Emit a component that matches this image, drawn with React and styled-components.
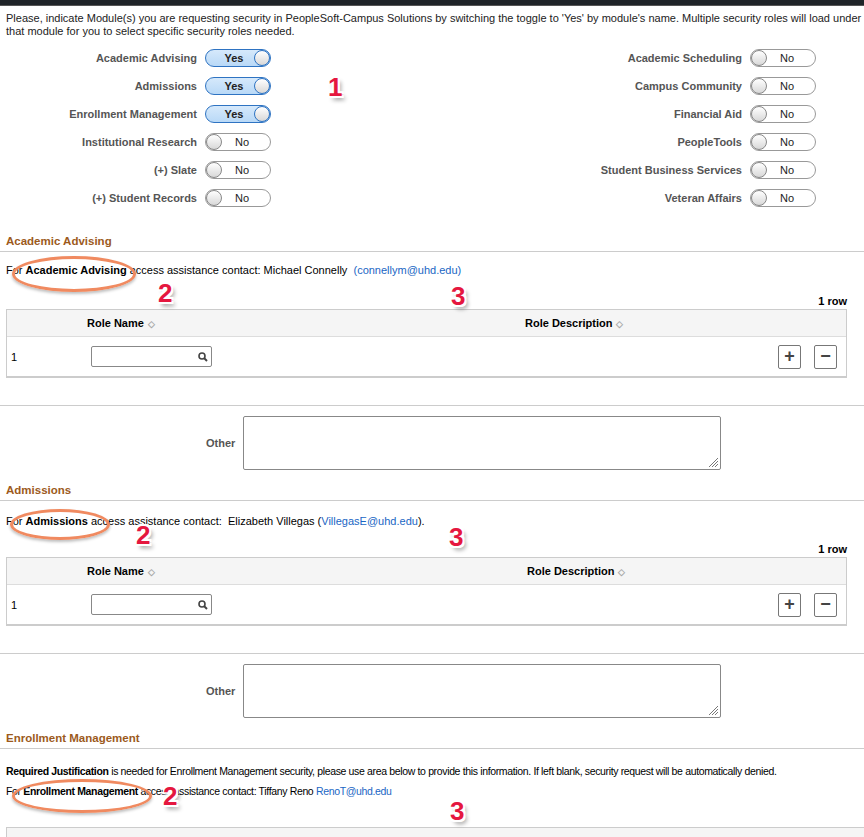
import React from "react";
import styled, { createGlobalStyle } from "styled-components";

const Global = createGlobalStyle`
  body { margin: 0; background: #fff; font-family: "Liberation Sans", Arial, sans-serif; font-size: 11px; color: #000; }
`;
const Page = styled.div` position: relative; width: 864px; height: 837px; overflow: hidden; `;
const TopBar = styled.div` height: 5px; background: #1f2428; border-bottom: 1px solid #555; `;
const Intro = styled.p` margin: 6px 0 0 6px; line-height: 13px; color: #222; `;
const Toggles = styled.div` display: grid; grid-template-columns: 1fr 1fr; margin-top: 11px; `;
const Col = styled.div` display: flex; flex-direction: column; gap: 10px; `;
const TRow = styled.div` display: flex; align-items: center; gap: 8px; height: 18px; `;
const TLabel = styled.span` width: ${p => p.$w}px; text-align: right; font-weight: bold; color: #555; `;
const Toggle = styled.span`
  position: relative; width: 64px; height: 16px; border-radius: 9px; border: 1px solid ${p => p.$on ? "#2e73c2" : "#999"};
  background: ${p => p.$on ? "linear-gradient(#d6e9fb,#b9d9f7)" : "#fff"};
  display: flex; align-items: center; justify-content: center; font-weight: ${p => p.$on ? "bold" : "normal"}; color: #222;
  & > i { position: absolute; top: 0; ${p => p.$on ? "right: 0;" : "left: 0;"} width: 16px; height: 16px; border-radius: 50%;
    border: 1px solid ${p => p.$on ? "#2e73c2" : "#888"}; box-sizing: border-box; background: linear-gradient(#fff,#d8d8d8); }
  & > b { font-weight: inherit; ${p => p.$on ? "margin-right: 8px;" : "margin-left: 8px;"} }
`;
const Header = styled.div` margin-top: ${p => p.$mt}px; padding: 0 6px 4px; border-bottom: 1px solid #ccc; color: #9c5a1c; font-weight: bold; font-size: 11.5px; `;
const Line = styled.p` margin: ${p => p.$mt}px 0 0 6px; white-space: nowrap; ${p => p.$narrow && "font-size: 10.5px; letter-spacing: -0.35px;"} `;
const Link = styled.span` color: #1a66c4; `;
const RowCount = styled.div` text-align: right; font-weight: bold; margin: ${p => p.$mt}px 17px 0 0; line-height: 13px; `;
const Grid = styled.div` margin: 1px 17px 0 6px; border: 1px solid #ccc; border-bottom: 2px solid #ccc; `;
const GHead = styled.div` height: 26px; background: #f5f5f5; border-bottom: 1px solid #ddd; display: grid; grid-template-columns: 80px ${p => p.$c}px 1fr; align-items: center; font-weight: bold; `;
const Sort = styled.span` color: #aaa; font-size: 9px; margin-left: 4px; `;
const GRow = styled.div` height: 39px; display: grid; grid-template-columns: 80px 1fr auto; align-items: center; padding-left: 4px; color: #000; `;
const Input = styled.div` width: 121px; height: 21px; border: 1px solid #888; border-radius: 2px; box-sizing: border-box; display: flex; justify-content: flex-end; align-items: center; padding-right: 3px; `;
const Btns = styled.div` display: flex; gap: 13px; padding-right: 9px; `;
const Btn = styled.span` width: 21px; height: 22px; border: 1px solid #777; border-radius: 2px; display: flex; align-items: center; justify-content: center; font-weight: bold; font-size: 18px; color: #444; `;
const Sep = styled.div` border-top: 1px solid #ccc; margin-top: ${p => p.$mt}px; `;
const OtherRow = styled.div` display: flex; gap: 8px; margin: 10px 0 0 206px; align-items: center; `;
const Area = styled.div` width: 476px; height: ${p => p.$h}px; border: 1px solid #888; border-radius: 2px; position: relative; `;
const Grip = styled.svg` position: absolute; right: 1px; bottom: 1px; `;
const GridTop = styled.div` margin: 30px 0 0 6px; height: 12px; border: 1px solid #ccc; border-right: none; background: #f5f5f5; `;
const Ellipse = styled.div` position: absolute; border: 3px solid #f08a60; border-radius: 50%; box-shadow: 0 2px 3px rgba(0,0,0,.25); `;
const Num = styled.div` position: absolute; font: 900 26px "Liberation Sans", Arial, sans-serif; color: #e5173f; text-shadow: -2px -2px 0 #fff, 2px -2px 0 #fff, -2px 2px 0 #fff, 2px 2px 0 #fff, 3px 4px 4px rgba(0,0,0,.4); `;

const left = [["Academic Advising",1],["Admissions",1],["Enrollment Management",1],["Institutional Research",0],["(+) Slate",0],["(+) Student Records",0]];
const right = ["Academic Scheduling","Campus Community","Financial Aid","PeopleTools","Student Business Services","Veteran Affairs"];

const Search = () => (<svg width="10" height="10" viewBox="0 0 10 10"><circle cx="4" cy="4" r="3" fill="none" stroke="#444" strokeWidth="1.6"/><path d="M6 6l3 3" stroke="#444" strokeWidth="2"/></svg>);

const RoleGrid = ({ desc }) => (
  <Grid>
    <GHead $c={desc}><span /><span>Role Name<Sort>◇</Sort></span><span>Role Description<Sort>◇</Sort></span></GHead>
    <GRow><span>1</span><Input><Search /></Input><Btns><Btn>+</Btn><Btn>−</Btn></Btns></GRow>
  </Grid>
);
const Other = ({ h }) => (
  <OtherRow><b style={{ color: "#555" }}>Other</b><Area $h={h}><Grip width="12" height="12" viewBox="0 0 12 12"><path d="M11 2L2 11M11 5L5 11M11 8L8 11" stroke="#777" /></Grip></Area></OtherRow>
);

export default function App() {
  return (
    <Page>
      <Global />
      <TopBar />
      <Intro>Please, indicate Module(s) you are requesting security in PeopleSoft-Campus Solutions by switching the toggle to 'Yes' by module's name. Multiple security roles will load under that module for you to select specific security roles needed.</Intro>
      <Toggles>
        <Col>{left.map(([l, on]) => (<TRow key={l}><TLabel $w={197}>{l}</TLabel><Toggle $on={!!on}><b>{on ? "Yes" : "No"}</b><i /></Toggle></TRow>))}</Col>
        <Col>{right.map(l => (<TRow key={l}><TLabel $w={310}>{l}</TLabel><Toggle><b>No</b><i /></Toggle></TRow>))}</Col>
      </Toggles>
      <Header $mt={28}>Academic Advising</Header>
      <Line $mt={12}>For <b>Academic Advising</b> access assistance contact: Michael Connelly &nbsp;<Link>(connellym@uhd.edu)</Link></Line>
      <RowCount $mt={19}>1 row</RowCount>
      <RoleGrid desc={438} />
      <Sep $mt={27} />
      <Other h={52} />
      <Header $mt={14}>Admissions</Header>
      <Line $mt={14}>For <b>Admissions</b> access assistance contact: &nbsp;Elizabeth Villegas (<Link>VillegasE@uhd.edu</Link>).</Line>
      <RowCount $mt={16}>1 row</RowCount>
      <RoleGrid desc={440} />
      <Sep $mt={27} />
      <Other h={52} />
      <Header $mt={14}>Enrollment Management</Header>
      <Line $mt={16} $narrow><b>Required Justification</b> is needed for Enrollment Management security, please use area below to provide this information. If left blank, security request will be automatically denied.</Line>
      <Line $mt={8} $narrow>For <b>Enrollment Management</b> access assistance contact: Tiffany Reno <Link>RenoT@uhd.edu</Link></Line>
      <GridTop />
      <Num style={{ left: 328, top: 72 }}>1</Num>
      <Ellipse style={{ left: 12, top: 256, width: 118, height: 30 }} />
      <Num style={{ left: 158, top: 278 }}>2</Num>
      <Num style={{ left: 451, top: 281 }}>3</Num>
      <Ellipse style={{ left: 10, top: 509, width: 94, height: 25 }} />
      <Num style={{ left: 136, top: 520 }}>2</Num>
      <Num style={{ left: 449, top: 522 }}>3</Num>
      <Ellipse style={{ left: 12, top: 779, width: 134, height: 28 }} />
      <Num style={{ left: 163, top: 781 }}>2</Num>
      <Num style={{ left: 450, top: 796 }}>3</Num>
    </Page>
  );
}
